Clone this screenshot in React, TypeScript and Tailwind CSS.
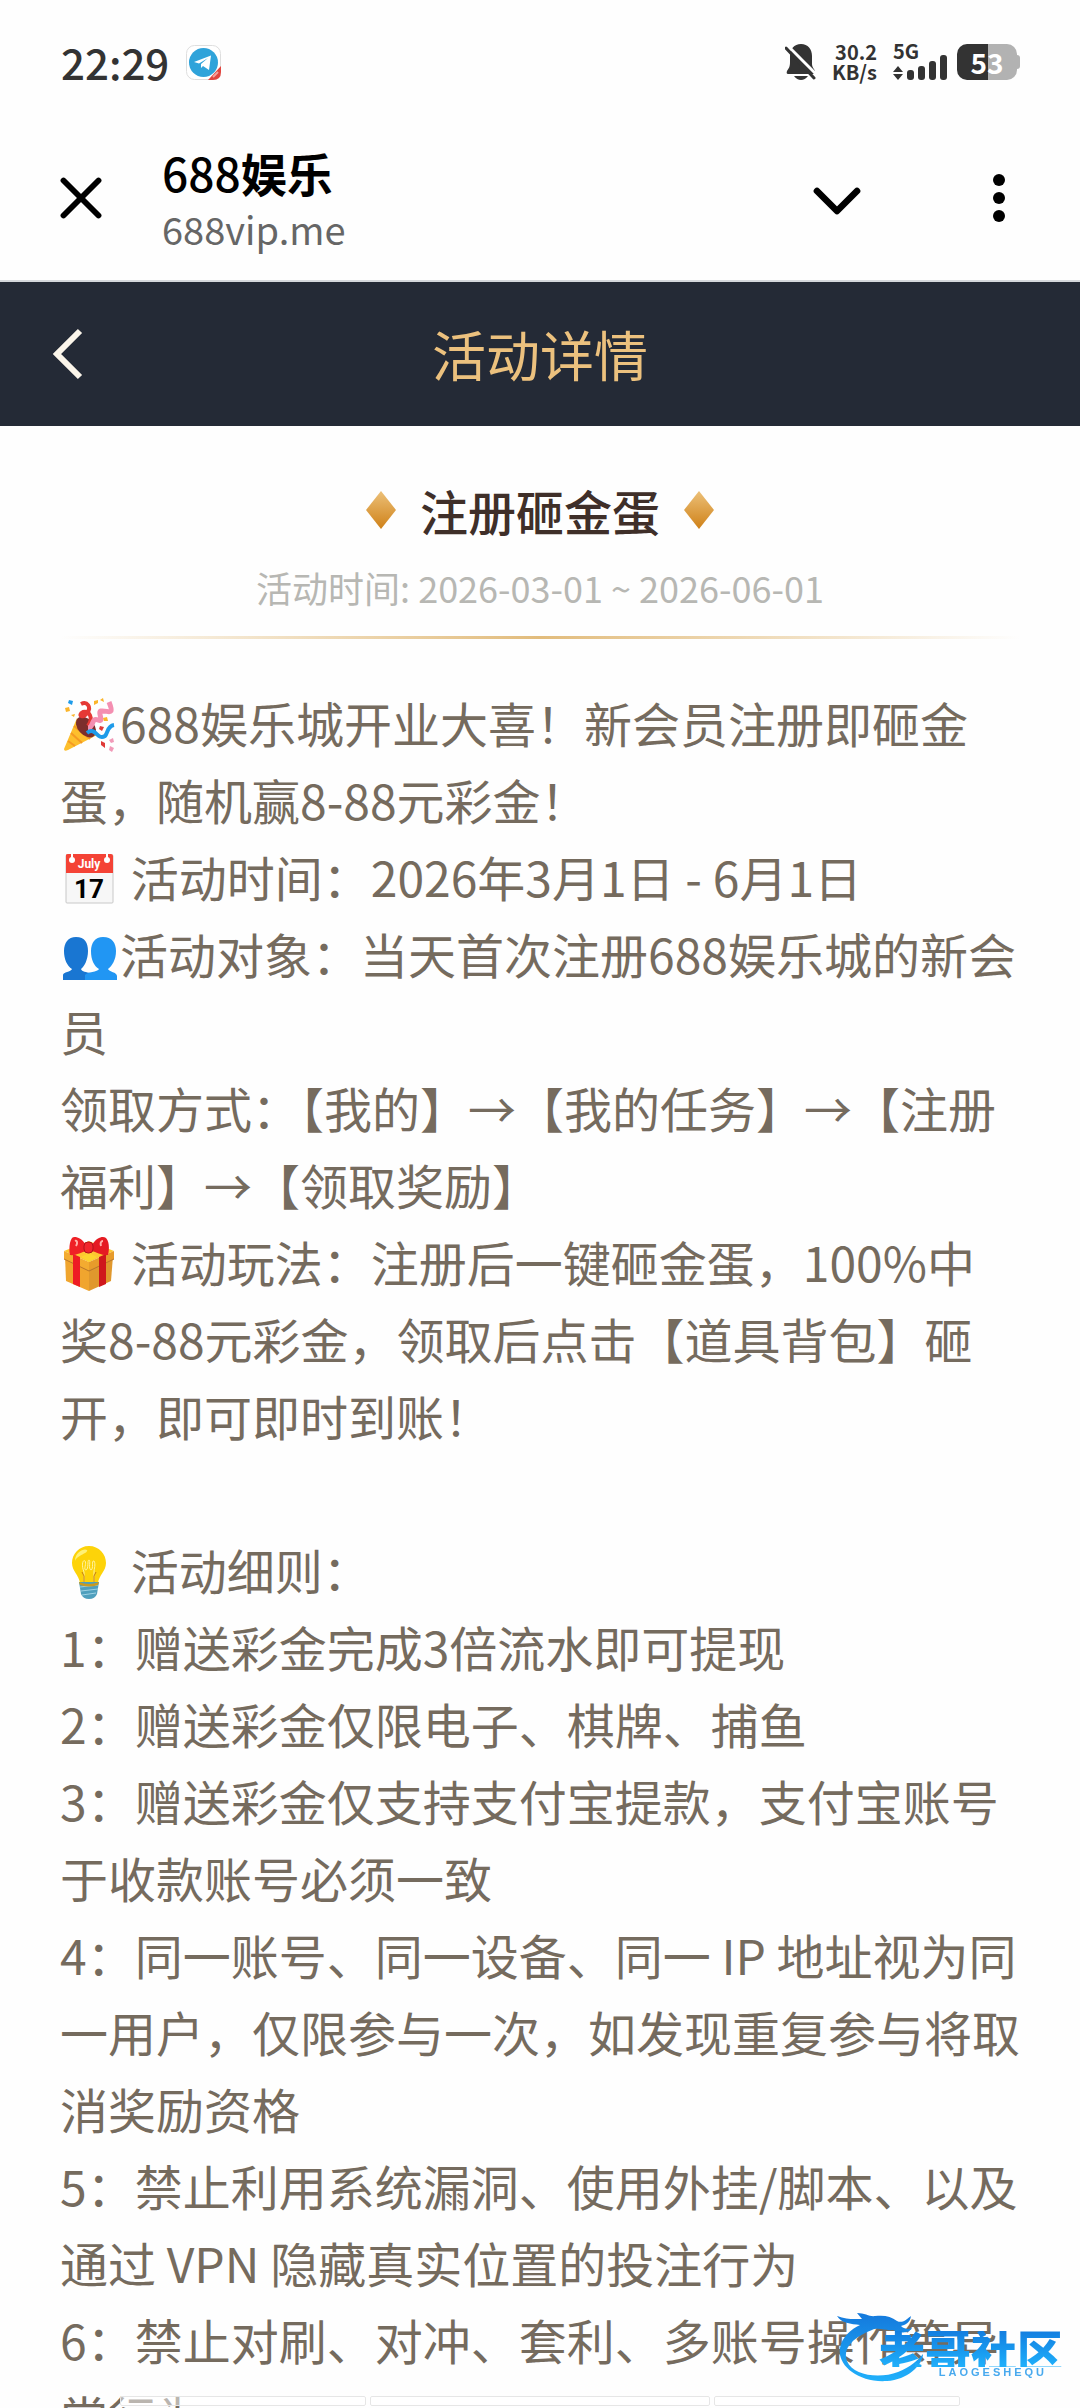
import React from 'react';
import { ChevronDown, X } from 'lucide-react';

const PartyPopper = () => (
  <svg viewBox="0 0 52 54" className="h-[54px] w-[52px]" role="img" aria-label="礼花">
    <path d="M14 20 L1 51 Q1 54 5 52 L34 37 Q20 36 14 20Z" fill="#fdbf2d" />
    <path d="M8 35 L19 45 M5 43 L12 48 M11 28 L27 41" stroke="#f59a23" strokeWidth="2" fill="none" />
    <ellipse cx="23" cy="29" rx="8" ry="12" transform="rotate(-42 23 29)" fill="#7c2e2c" />
    <path d="M25 28 C31 20 26 12 20 14 C14 17 20 21 24 15 C29 9 24 3 18 6" stroke="#e53935" strokeWidth="4" fill="none" />
    <path d="M25 30 C31 30 28 19 35 22 C42 25 34 14 38 13 C45 12 52 19 46 4" stroke="#f48fb1" strokeWidth="5" fill="none" />
    <path d="M24 35 C33 28 34 43 42 38 C45 35 44 28 51 27" stroke="#1e9be9" strokeWidth="4" fill="none" />
    <path d="M6 2 l4 1 -1 4 -4 -2z" fill="#1e9be9" />
    <path d="M2 10 l4 -1 1 4 -4 1z M31 3 l4 -1 0 3 -4 2z M37 2 l3 -2 1 4z M40 20 l4 -1 1 4 -4 0z M8 17 l4 -1 -1 3z" fill="#fbb52b" />
    <path d="M37 28 l4 1 -2 4 -3 -2z M38 43 l4 2 0 5 -4 -3z" fill="#df3a38" />
    <path d="M46 42 l4 -2 1 4 -3 1z M47 48 l4 2 -2 4 -3 -2z" fill="#f19ab8" />
  </svg>
);

const Calendar = () => (
  <svg viewBox="0 0 52 54" className="h-[54px] w-[52px]" role="img" aria-label="日历">
    <rect x="3" y="3" width="47" height="48" rx="1" fill="#f7f7f7" stroke="#c8c8c8" />
    <path d="M3 3 Q3 2 5 2 H48 Q50 2 50 4 V21 H3Z" fill="#f44336" />
    <path d="M9 1 V7 M44 1 V7" stroke="#fff" strokeWidth="2" />
    <circle cx="9" cy="8" r="3" fill="#fff" />
    <circle cx="44" cy="8" r="3" fill="#fff" />
    <text x="26" y="16" fontFamily="Roboto" fontWeight="700" fontSize="12" textAnchor="middle" fill="#fff">July</text>
    <text x="26" y="46" fontFamily="Roboto" fontWeight="700" fontSize="26" textAnchor="middle" fill="#000">17</text>
  </svg>
);

const People = () => (
  <svg viewBox="0 0 54 54" className="h-[54px] w-[54px]" role="img" aria-label="会员">
    <path d="M13 8 C22 8 25 14 25 22 C25 31 21 38 18 40 C19 43 23 43 28 44 V51 H0 V46 C0 43 8 43 9 40 C4 37 1 30 1 22 C1 14 5 8 13 8Z" fill="#1976d2" />
    <path d="M40 8 C49 8 53 14 53 22 C53 31 49 37 45 40 C46 43 54 43 54 47 V51 H22 V46 C24 43 35 43 36 40 C31 37 28 31 28 22 C28 14 32 8 40 8Z" fill="#2196f3" />
  </svg>
);

const Gift = () => (
  <svg viewBox="0 0 52 54" className="h-[54px] w-[52px]" role="img" aria-label="礼物">
    <path d="M2 19 L26 28 V54 L3 44Z" fill="#f0a52e" />
    <path d="M50 19 L26 28 V54 L48 44Z" fill="#e0982d" />
    <path d="M1 14 L26 4 L51 14 L26 25Z" fill="#fdc731" />
    <path d="M1 14 L26 25 V34 L1 22Z" fill="#f3ab30" />
    <path d="M51 14 L26 25 V34 L51 22Z" fill="#e79b2b" />
    <path d="M1 22 L26 34 L51 22" stroke="#b9762a" strokeWidth="1" fill="none" />
    <path d="M10 17 L17 20 V50 L10 47Z" fill="#ee1c24" />
    <path d="M43 17 L36 20 V50 L43 47Z" fill="#cf171c" />
    <path d="M26 16 L34 20 L26 25 L18 20Z" fill="#fdd42e" />
    <path d="M23 8 C18 0 11 -1 9 1 C6 5 6 14 7 18 C12 19 19 15 23 14Z" fill="#ef2026" />
    <path d="M29 8 C34 0 40 -1 43 1 C47 5 46 14 45 18 C40 19 33 15 29 14Z" fill="#e51b22" />
    <rect x="21" y="5" width="9" height="11" rx="4" fill="#f2272c" stroke="#b0141a" />
    <path d="M12 4 C14 3 15 6 13 9 M40 4 C38 4 37 6 38 9" stroke="#ffb0a8" strokeWidth="2" fill="none" />
  </svg>
);

const Bulb = () => (
  <svg viewBox="0 0 52 54" className="h-[54px] w-[52px]" role="img" aria-label="灯泡">
    <path d="M26 1 C36 1 43 9 43 18 C43 26 36 30 35 38 H17 C16 30 9 26 9 18 C9 9 16 1 26 1Z" fill="#fdd309" />
    <path d="M12 16 C12 7 21 3 24 5 C26 8 14 10 12 16Z" fill="#fff176" />
    <path d="M21 37 V27 C18 20 20 14 22 16 C24 18 20 25 23 25 C26 24 24 15 26 15 C28 15 25 24 28 25 C31 24 28 15 31 16 C33 19 31 24 31 27 V37" stroke="#fff3a0" strokeWidth="1" fill="none" />
    <path d="M21 38 V31 L19 27 M31 38 V31 L33 27" stroke="#c47b11" strokeWidth="1" fill="none" />
    <path d="M16 37 H36 L34 49 Q32 54 26 54 Q20 54 18 49Z" fill="#4f9fbd" />
    <path d="M17 42 L35 40 M18 46 L35 44 M19 50 L33 48" stroke="#9ed2e4" strokeWidth="1" />
    <path d="M16 37 Q26 41 36 37 L35 40 Q26 43 17 40Z" fill="#c99a21" />
  </svg>
);

const Emoji = ({ children }: { children: React.ReactNode }) => (
  <span className="inline-flex h-[54px] w-[60px] items-center pl-[3px] align-[-9px]">{children}</span>
);

const Telegram = () => (
  <svg viewBox="0 0 35 35" className="h-[35px] w-[35px]" role="img" aria-label="Telegram">
    <rect x=".5" y=".5" width="34" height="34" rx="8" fill="#fff" stroke="#dedede" />
    <circle cx="17.500" cy="17.500" r="14.500" fill="#2fa3da" />
    <path d="M8 17 L25 10.500 L23 25 L17 21 L15 23 V19 L22 13 L13 18.500Z" fill="#fff" />
    <path d="M22 35 L35 21 V27 Q35 35 27 35Z" fill="#e2453f" />
    <path d="M27 32 L32 27" stroke="#f3a39e" strokeWidth="2" />
  </svg>
);

const MutedBell = () => (
  <svg viewBox="0 0 32 36" className="h-9 w-8" role="img" aria-label="静音">
    <path d="M16 0 C23 0 27 5 27 12 V20 C27 24 30 25 30 28 Q30 30 28 30 H3 Q1 30 2 27 C5 23 5 21 5 17 V12 C5 5 9 0 16 0Z" fill="#333" />
    <path d="M9 32 H23 Q20 36 16 36 Q12 36 9 32Z" fill="#333" />
    <path d="M3 2 L32 31" stroke="#fff" strokeWidth="3" />
    <path d="M1 4 L29 34" stroke="#333" strokeWidth="3" strokeLinecap="round" />
  </svg>
);

const Signal = () => (
  <svg viewBox="0 0 54 25" className="h-[25px] w-[54px]" role="img" aria-label="信号">
    <path d="M5 11 L10 17 H0Z M0 19 H10 L5 25Z" fill="#333" />
    <rect x="14" y="15" width="7" height="10" rx="3" fill="#333" />
    <rect x="25" y="11" width="7" height="14" rx="3" fill="#333" />
    <rect x="36" y="6" width="7" height="19" rx="3" fill="#333" />
    <rect x="47" y="0" width="7" height="25" rx="3" fill="#333" />
  </svg>
);

const StatusBar = () => (
  <div className="flex h-[124px] items-center justify-between pr-[60px] pl-[61px] text-[#333]">
    <div className="flex items-center gap-[17px]">
      <time className="text-[42px] leading-none font-medium">22:29</time>
      <Telegram />
    </div>
    <div className="flex items-center">
      <MutedBell />
      <div className="ml-3 flex w-[48px] flex-col items-end text-[20px] leading-5 font-bold">
        <span>30.2</span>
        <span>KB/s</span>
      </div>
      <div className="ml-4 flex flex-col">
        <span className="h-[11px] text-[20px] leading-[14px] font-bold">5G</span>
        <Signal />
      </div>
      <div className="ml-[10px] flex items-center">
        <div className="flex h-9 w-[60px] items-center justify-center rounded-[10px] bg-linear-to-r from-[#333] from-52% to-[#b2b2b2] to-52% text-[28px] font-bold text-white">
          53
        </div>
        <div className="h-[14px] w-[3px] rounded-r-sm bg-[#b2b2b2]" />
      </div>
    </div>
  </div>
);

const BrowserBar = () => (
  <div className="flex h-[158px] items-start border-b-2 border-[#d5d8dc] pr-[54px] pl-[46px] text-black">
    <button aria-label="关闭" className="mt-[39px]">
      <X size={70} strokeWidth={2} />
    </button>
    <div className="ml-[46px] flex-1 pt-5">
      <h1 className="text-[46px] leading-[56px] font-medium">
        688<span className="font-bold">娱乐</span>
      </h1>
      <p className="text-[38px] leading-[58px] text-[#666]">688vip.me</p>
    </div>
    <button aria-label="展开" className="mt-[37px]">
      <ChevronDown size={80} strokeWidth={2} />
    </button>
    <button aria-label="更多" className="mt-[50px] mr-[21px] ml-[116px]">
      <svg viewBox="0 0 12 48" className="h-12 w-3" fill="#000">
        <circle cx="6" cy="6" r="6" />
        <circle cx="6" cy="24" r="6" />
        <circle cx="6" cy="42" r="6" />
      </svg>
    </button>
  </div>
);

const Diamond = () => (
  <svg viewBox="0 0 30 38" className="h-[38px] w-[30px]" aria-hidden="true">
    <defs>
      <linearGradient id="diamond" x1="0" y1="0" x2="0" y2="1">
        <stop offset="0" stopColor="#ecc078" />
        <stop offset="1" stopColor="#cf8118" />
      </linearGradient>
    </defs>
    <path d="M15 0 L30 19 L15 38 L0 19Z" fill="url(#diamond)" />
  </svg>
);

const Watermark = () => (
  <div className="fixed right-[17px] bottom-[26px] flex h-[72px] w-[226px] justify-end">
    <svg viewBox="0 0 92 72" className="absolute top-0 left-0 h-[72px] w-[92px]" aria-hidden="true">
      <defs>
        <linearGradient id="dragon" x1="0" y1="0" x2="0" y2="1">
          <stop offset="0" stopColor="#1479dc" />
          <stop offset="1" stopColor="#20b0fb" />
        </linearGradient>
      </defs>
      <path
        d="M0 6 C10 10 18 9 25 9 L20 3 C28 3 33 7 38 6 C47 5 54 6 60 11 C66 14 71 8 74 6 C73 13 68 15 64 16 C68 20 74 19 75 18 C71 25 60 22 56 20 C48 21 42 17 35 20 C17 27 5 38 10 51 C16 66 43 69 61 62 C74 57 82 49 86 44 C86 55 70 70 50 71 C22 73 0 56 3 38 C5 27 14 19 23 15 C14 14 4 13 0 6Z"
        fill="url(#dragon)"
      />
    </svg>
    <div className="relative flex flex-col items-end pt-[21px]">
      <span className="bg-linear-to-b from-[#147ee0] to-[#20b0fb] bg-clip-text text-[46px] leading-[36px] font-black text-transparent">老哥社区</span>
      <span className="pr-4 font-[Liberation_Sans] text-[11px] leading-[10px] font-bold tracking-[3px] text-[#48a9ee]">LAOGESHEQU</span>
    </div>
  </div>
);

export default function App() {
  return (
    <div className="h-screen overflow-hidden bg-[#fefefe] font-['Noto_Sans_CJK_SC',sans-serif]">
      <StatusBar />
      <BrowserBar />
      <header className="grid h-[144px] grid-cols-[1fr_auto_1fr] items-center bg-[#242a36] px-[52px]">
        <button aria-label="返回" className="justify-self-start">
          <svg viewBox="0 0 32 52" className="h-[52px] w-8" fill="none" stroke="#fbf5ea" strokeWidth="6">
            <path d="M28 3 L5 26 L28 49" />
          </svg>
        </button>
        <h2 className="text-[54px] leading-[80px] text-[#ecc17e]">活动详情</h2>
      </header>

      <main className="px-[60px]">
        <div className="flex items-center justify-center gap-6 pt-[49px]">
          <Diamond />
          <h3 className="text-[48px] leading-[70px] font-medium text-[#3f2f29]">注册砸金蛋</h3>
          <Diamond />
        </div>
        <p className="pt-[15px] text-center text-[36px] leading-[54px] text-[#b7b7b3]">活动时间: 2026-03-01 ~ 2026-06-01</p>
        <div className="mt-[22px] h-[3px] bg-linear-to-r from-transparent via-[#e2bc7c] to-transparent" />

        <div className="pt-[45px] text-[48px] leading-[77px] text-[#756b5e]">
          <p><Emoji><PartyPopper /></Emoji>688娱乐城开业大喜！新会员注册即砸金蛋，随机赢8-88元彩金！</p>
          <p><Emoji><Calendar /></Emoji> 活动时间：2026年3月1日 - 6月1日</p>
          <p><Emoji><People /></Emoji>活动对象：当天首次注册688娱乐城的新会员</p>
          <p>领取方式：【我的】→【我的任务】→【注册福利】→【领取奖励】</p>
          <p><Emoji><Gift /></Emoji> 活动玩法：注册后一键砸金蛋，100%中奖8-88元彩金，领取后点击【道具背包】砸开，即可即时到账！</p>
          <p className="pt-[77px]"><Emoji><Bulb /></Emoji> 活动细则：</p>
          <p>1：赠送彩金完成3倍流水即可提现</p>
          <p>2：赠送彩金仅限电子、棋牌、捕鱼</p>
          <p>3：赠送彩金仅支持支付宝提款，支付宝账号于收款账号必须一致</p>
          <p>4：同一账号、同一设备、同一 IP 地址视为同一用户，仅限参与一次，如发现重复参与将取消奖励资格</p>
          <p>5：禁止利用系统漏洞、使用外挂/脚本、以及通过 VPN 隐藏真实位置的投注行为</p>
          <p>6：禁止对刷、对冲、套利、多账号操作等异常行为</p>
        </div>
      </main>

      <div className="fixed inset-x-0 bottom-[2px] grid h-[10px] grid-cols-[246fr_340fr_246fr] gap-1 px-[120px]">
        <div className="rounded-xs border border-[#e6e6e6] bg-white/50" />
        <div className="rounded-xs border border-[#e6e6e6] bg-white/50" />
        <div className="rounded-xs border border-[#e6e6e6] bg-white/50" />
      </div>
      <Watermark />
    </div>
  );
}
